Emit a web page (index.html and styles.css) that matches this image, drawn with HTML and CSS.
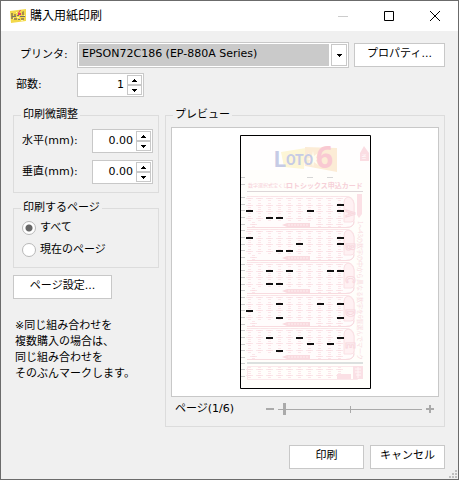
FILE: index.html
```html
<!DOCTYPE html>
<html lang="ja">
<head>
<meta charset="utf-8">
<meta name="viewport" content="width=device-width, initial-scale=1">
<title>購入用紙印刷</title>
<link rel="stylesheet" href="styles.css">
</head>
<body>
<div class="dialog">
  <header class="titlebar">
    <svg class="app-icon" width="16" height="16" viewBox="0 0 16 16" aria-hidden="true">
      <path d="M0 3 16 1v12L1 15z" fill="#f3d94a"/>
      <path d="M1 5h2v6H1zM4 6h2v2H4zM4 10h3v2H4zM12 4l2-1v4h-2zM11 10h3v2h-3z" fill="#a58f4c"/>
      <path d="M2 8h4v1H2zM7 7h2v1H7zM10 8h5v1h-5zM8 11h2v1H8z" fill="#77716b"/>
      <path d="M6 4h1v1H6zM3 10h1v1H3zM14 7h1v1h-1zM7 9h2v1H7zM11 12h2v1h-2z" fill="#fff6a8"/>
      <path d="M10 2h1L9 5h2v2H8V5z" fill="#e2386f"/>
    </svg>
    <h1 class="title">購入用紙印刷</h1>
    <div class="window-buttons">
      <button class="window-button" type="button" aria-label="最小化" disabled><svg width="12" height="12" viewBox="0 0 12 12"><path d="M1 6.5h10" stroke="#ccc"/></svg></button>
      <button class="window-button" type="button" aria-label="最大化"><svg width="12" height="12" viewBox="0 0 12 12"><path d="M1.5 1.5h9v9h-9z" fill="none" stroke="#000"/></svg></button>
      <button class="window-button" type="button" aria-label="閉じる"><svg width="12" height="12" viewBox="0 0 12 12"><path d="m1 1 10 10M11 1 1 11" fill="none" stroke="#000"/></svg></button>
    </div>
  </header>

  <form class="content">
    <div class="row printer-row">
      <label class="row-label" for="printer">プリンタ:</label>
      <div class="combo">
        <select id="printer" class="combo-select"><option>EPSON72C186 (EP-880A Series)</option></select>
        <span class="combo-arrow" aria-hidden="true"><svg width="5" height="3" viewBox="0 0 5 3"><path d="M0 0h5v1H4v1H3v1H2V2H1V1H0z"/></svg></span>
      </div>
      <button class="button" type="button">プロパティ...</button>
    </div>
    <div class="row copies-row">
      <label class="row-label" for="copies">部数:</label>
      <div class="spin">
        <input id="copies" class="spin-input" type="text" inputmode="numeric" value="1">
        <span class="spin-buttons">
          <button class="spin-button" type="button" aria-label="増やす"><svg width="5" height="3" viewBox="0 0 5 3"><path d="M2 0h1v1h1v1h1v1H0V2h1V1h1z"/></svg></button>
          <button class="spin-button" type="button" aria-label="減らす"><svg width="5" height="3" viewBox="0 0 5 3"><path d="M0 0h5v1H4v1H3v1H2V2H1V1H0z"/></svg></button>
        </span>
      </div>
    </div>

    <div class="columns">
      <div class="settings">
        <fieldset class="group">
          <legend>印刷微調整</legend>
          <div class="adjust">
            <label for="horizontal">水平(mm):</label>
            <div class="spin">
              <input id="horizontal" class="spin-input" type="text" inputmode="decimal" value="0.00">
              <span class="spin-buttons">
                <button class="spin-button" type="button" aria-label="増やす"><svg width="5" height="3" viewBox="0 0 5 3"><path d="M2 0h1v1h1v1h1v1H0V2h1V1h1z"/></svg></button>
                <button class="spin-button" type="button" aria-label="減らす"><svg width="5" height="3" viewBox="0 0 5 3"><path d="M0 0h5v1H4v1H3v1H2V2H1V1H0z"/></svg></button>
              </span>
            </div>
            <label for="vertical">垂直(mm):</label>
            <div class="spin">
              <input id="vertical" class="spin-input" type="text" inputmode="decimal" value="0.00">
              <span class="spin-buttons">
                <button class="spin-button" type="button" aria-label="増やす"><svg width="5" height="3" viewBox="0 0 5 3"><path d="M2 0h1v1h1v1h1v1H0V2h1V1h1z"/></svg></button>
                <button class="spin-button" type="button" aria-label="減らす"><svg width="5" height="3" viewBox="0 0 5 3"><path d="M0 0h5v1H4v1H3v1H2V2H1V1H0z"/></svg></button>
              </span>
            </div>
          </div>
        </fieldset>
        <fieldset class="group">
          <legend>印刷するページ</legend>
          <div class="choices">
            <label class="choice"><input type="radio" name="pages" checked>すべて</label>
            <label class="choice"><input type="radio" name="pages">現在のページ</label>
          </div>
        </fieldset>
        <button class="button page-setup" type="button">ページ設定...</button>
        <p class="note">※同じ組み合わせを<br>複数購入の場合は、<br>同じ組み合わせを<br>そのぶんマークします。</p>
      </div>

      <fieldset class="group preview">
        <legend>プレビュー</legend>
        <div class="preview-body">
          <div class="preview-area">
            <svg class="card" width="131" height="254" viewBox="0 0 131 254" role="img" aria-label="ロトシックス申込カード">
              <defs>
                <g id="bubble" fill="none">
                  <path d="M8 -1.500h3M6 .5h7M8 2.500h3" stroke="#fbe6ea"/>
                  <path d="M8 .5h3" stroke="#f9dde2"/>
                </g>
                <g id="bubbles">
                  <use href="#bubble"/><use href="#bubble" x="10"/><use href="#bubble" x="20"/><use href="#bubble" x="30"/><use href="#bubble" x="40"/>
                  <use href="#bubble" x="50"/><use href="#bubble" x="60"/><use href="#bubble" x="70"/><use href="#bubble" x="80"/><use href="#bubble" x="90"/>
                </g>
                <g id="panel">
                  <path d="M7 .5h99q8 0 8 8v17q0 6-8 6H7" fill="#fffcfc" stroke="#fae3e7"/>
                  <path d="M7 31.500h99q8 0 8-6" fill="none" stroke="#f8dbe0"/>
                  <path d="M104 26V6q0-4 4-5 5 1 6 7v15q0 3-3 3z" fill="#fff1f3" stroke="#fae0e4"/>
                  <use href="#bubbles" y="2"/><use href="#bubbles" y="9"/><use href="#bubbles" y="15"/><use href="#bubbles" y="22"/>
                  <use href="#bubble" x="4" y="28"/><use href="#bubble" x="70" y="28"/><use href="#bubble" x="80" y="28"/><use href="#bubble" x="90" y="28"/>
                  <path d="m42 29 5-2h23v4H47z" fill="#f9dbe0"/>
                  <path d="M48 29h20" stroke="#fdeef0" stroke-dasharray="2 1"/>
                </g>
                <path id="tick" d="M1 0h4" stroke="#ccc"/>
                <path id="mark" d="M6 0h7" stroke="#111" stroke-width="2"/>
              </defs>
              <path d="M.5.5h130v253H.5z" fill="#fffefe"/>
              <path d="M1 35h129v218H1z" fill="#fffefb"/>

              <g class="logo">
                <path d="m41 17 25-4-2 21-20-2z" fill="#fdf6d6"/>
                <path d="m65 12 32 1v24l-32-6z" fill="#fcecd6"/>
                <path d="m73 16 1 5 4-3-2 5 4 1-4 1 2 5-4-3-1 5-1-5-4 3 2-5-4-1 4-1-2-5 4 3z" fill="#fffdf0"/>
                <text class="logo-word" x="34" y="32"><tspan class="logo-initial">L</tspan><tspan dy="-2">OTO</tspan></text>
                <text class="logo-six" x="76" y="33">6</text>
              </g>
              <path d="m120 18 4-7 5 7v8h-9z" fill="#fbdde3"/>
              <text class="print tiny" transform="translate(126 24) rotate(-90)">IN</text>
              <text class="print small" x="8" y="52">数字選択式宝くじ</text>
              <text class="print heading" x="46" y="53">ロトシックス申込カード</text>
              <path d="M7 56.500h116" stroke="#ddd6d8"/>
              <path d="M67 42.500h6M87 42.500h6" stroke="#d6d6d6"/>

              <use href="#panel" y="61"/><use href="#panel" y="94"/><use href="#panel" y="127"/><use href="#panel" y="160"/><use href="#panel" y="193"/>
              <g class="tab-letter">
                <text transform="translate(106 75) rotate(90)">A</text>
                <text transform="translate(106 108) rotate(90)">B</text>
                <text transform="translate(106 141) rotate(90)">C</text>
                <text transform="translate(106 174) rotate(90)">D</text>
                <text transform="translate(106 207) rotate(90)">E</text>
              </g>
              <path d="M117 59h5v20l-3 4-2-3z" fill="#fbe0e5"/>
              <text class="print side" transform="translate(118 86) rotate(90)">1～43の数字の中から異なる数字を6個選んでマーク</text>

              <path d="M7 228h116" stroke="#dce0df" stroke-width="2"/>
              <path d="M7.500 231.500h110v13h-110z" fill="none" stroke="#fbe8eb"/>
              <use href="#bubbles" y="234"/><use href="#bubbles" y="240"/>
              <path d="M113 231h10v13h-10z" fill="#fae0e5"/>
              <path d="M97 239h14v5H97z" fill="#fbe0e5"/>
              <path d="M115 234h6M115 237h6M116 240h5M118 232v11" stroke="#fff6f7"/>

              <g>
                <use href="#tick" y="42.500"/><use href="#tick" y="49.500"/><use href="#tick" y="62.500"/><use href="#tick" y="69.500"/><use href="#tick" y="75.500"/><use href="#tick" y="82.500"/><use href="#tick" y="89.500"/>
                <use href="#tick" y="95.500"/><use href="#tick" y="102.500"/><use href="#tick" y="109.500"/><use href="#tick" y="115.500"/><use href="#tick" y="122.500"/><use href="#tick" y="129.500"/><use href="#tick" y="135.500"/>
                <use href="#tick" y="142.500"/><use href="#tick" y="149.500"/><use href="#tick" y="155.500"/><use href="#tick" y="162.500"/><use href="#tick" y="169.500"/><use href="#tick" y="175.500"/><use href="#tick" y="182.500"/>
                <use href="#tick" y="189.500"/><use href="#tick" y="195.500"/><use href="#tick" y="202.500"/><use href="#tick" y="209.500"/><use href="#tick" y="215.500"/><use href="#tick" y="222.500"/><use href="#tick" y="228.500"/><use href="#tick" y="234.500"/><use href="#tick" y="241.500"/>
              </g>
              <g>
                <use href="#mark" x="91" y="70"/>
                <use href="#mark" x="0" y="76"/><use href="#mark" x="61" y="76"/><use href="#mark" x="91" y="76"/>
                <use href="#mark" x="20" y="83"/><use href="#mark" x="30" y="83"/>
                <use href="#mark" x="0" y="103"/><use href="#mark" x="91" y="103"/>
                <use href="#mark" x="50" y="109"/><use href="#mark" x="91" y="109"/>
                <use href="#mark" x="30" y="116"/><use href="#mark" x="40" y="116"/>
                <use href="#mark" x="20" y="136"/><use href="#mark" x="40" y="136"/><use href="#mark" x="81" y="136"/><use href="#mark" x="91" y="136"/>
                <use href="#mark" x="20" y="149"/><use href="#mark" x="30" y="149"/>
                <use href="#mark" x="30" y="169"/><use href="#mark" x="71" y="169"/><use href="#mark" x="91" y="169"/>
                <use href="#mark" x="0" y="176"/>
                <use href="#mark" x="30" y="183"/><use href="#mark" x="91" y="183"/>
                <use href="#mark" x="20" y="203"/><use href="#mark" x="50" y="203"/><use href="#mark" x="91" y="203"/>
                <use href="#mark" x="61" y="209"/><use href="#mark" x="81" y="209"/>
                <use href="#mark" x="30" y="216"/>
              </g>
              <path d="M.5.5h130v253H.5z" fill="none" stroke="#000"/>
            </svg>
          </div>
          <div class="pager">
            <label class="pager-label" for="page">ページ(1/6)</label>
            <svg width="8" height="8" viewBox="0 0 8 8" aria-hidden="true"><path d="M0 4h8" stroke="#aaa" stroke-width="2"/></svg>
            <input id="page" class="slider" type="range" min="1" max="6" value="1">
            <svg width="8" height="8" viewBox="0 0 8 8" aria-hidden="true"><path d="M0 4h8M4 0v8" stroke="#aaa" stroke-width="2"/></svg>
          </div>
        </div>
      </fieldset>
    </div>

    <div class="actions">
      <button class="button" type="submit">印刷</button>
      <button class="button" type="button">キャンセル</button>
    </div>
  </form>
  <svg class="grip" width="8" height="8" viewBox="0 0 8 8" aria-hidden="true"><path d="M6 0h2v2H6zM3 3h2v2H3zM6 3h2v2H6zM0 6h2v2H0zM3 6h2v2H3zM6 6h2v2H6z" fill="#bfbfbf"/></svg>
</div>
</body>
</html>
```
FILE: styles.css
```css
* {
  box-sizing: border-box;
}

body {
  margin: 0;
  color: #000;
  font: 11px/16px "DejaVu Sans", "Noto Sans CJK JP", sans-serif;
}

button,
input,
select {
  margin: 0;
  color: inherit;
  font: inherit;
}

svg {
  display: block;
  flex: none;
}

.dialog {
  position: relative;
  display: flex;
  flex-direction: column;
  min-height: 100vh;
  border: 1px solid #6b6b6b;
  background: #f0f0f0;
}

.titlebar {
  display: flex;
  align-items: center;
  height: 30px;
  padding-left: 9px;
  background: #fff;
}

.title {
  flex: 1;
  margin: 0 0 0 4px;
  font-size: 12px;
  font-weight: 400;
}

.window-buttons {
  display: flex;
}

.window-button {
  display: grid;
  place-items: center;
  width: 46px;
  height: 30px;
  padding: 0;
  border: 0;
  background: none;
}

.content {
  display: flex;
  flex: 1;
  flex-direction: column;
  padding: 11px 13px 10px 12px;
}

.row {
  display: flex;
  align-items: center;
}

.row-label {
  width: 64px;
  padding-left: 3px;
}

.printer-row .row-label {
  padding-left: 7px;
}

.copies-row {
  margin: 5px 0 10px;
}

.copies-row .spin {
  width: 67px;
}

.combo {
  display: flex;
  flex: 1;
  height: 26px;
  margin-right: 5px;
  padding: 1px;
  border: 1px solid #c8c8c8;
  background: #fff;
}

.combo-select {
  flex: 1;
  min-width: 0;
  padding: 0 3px 2px;
  border: 0;
  background: #cacaca;
  appearance: none;
}

.combo-arrow {
  display: grid;
  place-items: center;
  width: 16px;
  margin-left: 2px;
  border: 1px solid #c8c8c8;
  pointer-events: none;
}

.button {
  height: 24px;
  min-width: 75px;
  padding: 0 9px 2px;
  border: 1px solid #c8c8c8;
  background: #fff;
}

.printer-row .button {
  width: 91px;
}

.spin {
  display: flex;
  height: 24px;
  padding: 1px;
  border: 1px solid #c8c8c8;
  background: #fff;
}

.spin-input {
  flex: 1;
  width: 0;
  min-width: 0;
  padding: 0 3px 0;
  border: 0;
  background: none;
  text-align: right;
}

.spin-buttons {
  display: flex;
  flex-direction: column;
  width: 15px;
}

.spin-button {
  display: grid;
  flex: 1;
  place-items: center;
  padding: 0;
  border: 1px solid #c8c8c8;
  background: #fff;
}

.columns {
  display: flex;
  flex: 1;
  gap: 6px;
}

.settings {
  flex: none;
  width: 146px;
}

.group {
  min-width: 0;
  margin: 0 0 7px;
  padding: 0 5px;
  border: 1px solid #dcdcdc;
}

.group legend {
  margin-left: 2px;
  padding: 0 2px;
}

.adjust {
  display: grid;
  grid-template-columns: 1fr 61px;
  align-items: center;
  row-gap: 7px;
  padding: 6px 0 8px 3px;
  white-space: nowrap;
}

.choices {
  padding: 1px 0 6px 3px;
}

.choice {
  display: flex;
  align-items: center;
  gap: 4px;
  height: 22px;
}

.choice input {
  width: 14px;
  height: 14px;
  border: 1px solid #b8b8b8;
  border-radius: 50%;
  background: #fff;
  appearance: none;
}

.choice input:checked {
  background: radial-gradient(circle, #666 3px, #fff 4px);
}

.page-setup {
  width: 99px;
}

.note {
  margin: 19px 0 0 2px;
}

.preview {
  flex: 1;
  margin: 0;
}

.preview-area {
  display: grid;
  place-items: center;
  margin-top: 4px;
  padding: 7px;
  border: 1px solid #c8c8c8;
  background: #fff;
}

.pager {
  display: flex;
  align-items: center;
  height: 28px;
  padding: 0 5px 4px 4px;
}

.pager-label {
  flex: 1;
}

.slider {
  width: 144px;
  height: 12px;
  margin: 0 4px;
  background:
    linear-gradient(#aaa, #aaa) 50% 50% / 1px 7px no-repeat,
    linear-gradient(#aaa, #aaa) 50% 50% / 100% 1px no-repeat;
  appearance: none;
}

.slider::-webkit-slider-runnable-track {
  padding: 0 5px;
}

.slider::-webkit-slider-thumb {
  width: 3px;
  height: 12px;
  background: #aaa;
  appearance: none;
}

.actions {
  display: flex;
  justify-content: flex-end;
  gap: 6px;
  margin-top: 18px;
}

.grip {
  position: absolute;
  right: 1px;
  bottom: 1px;
}

.card text {
  font-family: "Noto Sans CJK JP", sans-serif;
}

.card .logo-word {
  fill: #c6cbe5;
  font-family: Roboto, sans-serif;
  font-size: 14px;
  font-weight: 700;
}

.logo-initial {
  font-size: 22px;
}

.card .logo-six {
  fill: #f9c9d2;
  font-family: "Open Sans", sans-serif;
  font-size: 30px;
  font-weight: 700;
}

.print {
  fill: #f6d0d8;
}

.card .tiny {
  fill: #fff;
  font-size: 5px;
}

.small {
  font-size: 5px;
}

.heading {
  font-size: 7px;
  font-weight: 700;
}

.side {
  fill: #f8dbe1;
  font-size: 6px;
}

.tab-letter text {
  fill: #fff;
  stroke: #f8d8de;
  font-size: 11px;
  font-weight: 700;
}
```
